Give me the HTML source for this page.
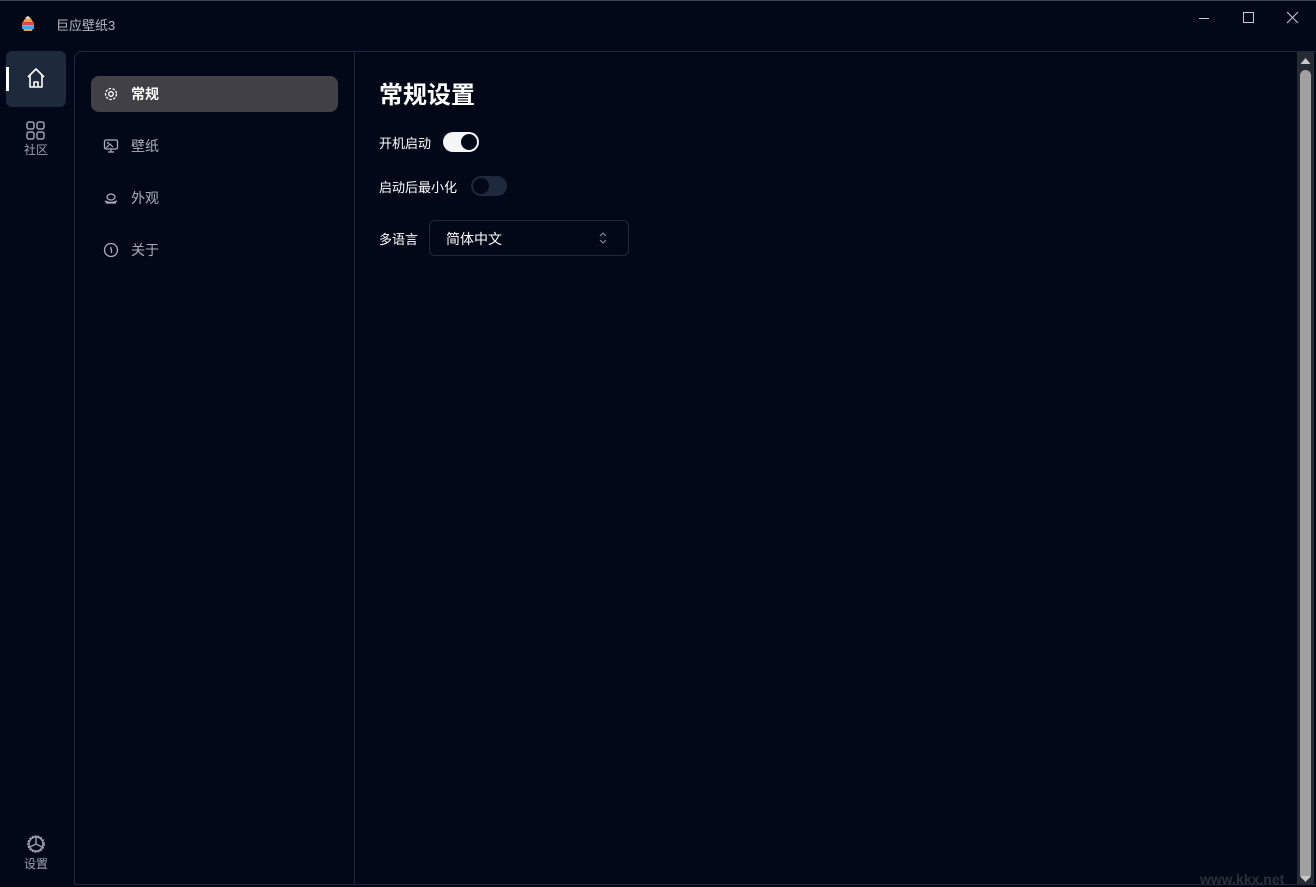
<!DOCTYPE html>
<html><head><meta charset="utf-8"><style>
*{margin:0;padding:0;box-sizing:border-box}
body{width:1316px;height:887px;background:#020817;font-family:"Liberation Sans","Noto Sans CJK SC",sans-serif;color:#e5e7eb;position:relative;overflow:hidden}
.abs{position:absolute}
.title{left:56px;top:15px;font-size:13px;color:#b8bcc6}
.panel{left:74px;top:51px;width:1250px;height:834px;border:1px solid #1e293b;border-radius:8px 0 0 0}
.div{left:354px;top:52px;width:1px;height:832px;background:#1e293b}
.nav{left:91px;width:247px;height:36px;border-radius:8px;font-size:14px;color:#aab0bb}
.nav span{position:absolute;left:40px;top:8px}
.nav svg{position:absolute;left:12px;top:10px}
.sw{width:36px;height:20px;border-radius:10px}
</style></head><body>
<div class="abs" style="left:0;top:0;width:1316px;height:1px;background:#3a4556"></div>
<svg class="abs" style="left:19px;top:15px" width="18" height="18" viewBox="0 0 18 18"><path d="M9 1 L13 5 L15 10 L13 16 L5 16 L3 10 L5 5Z" fill="#f0a040"/><rect x="3" y="7" width="12" height="3" fill="#e04060"/><rect x="3" y="11" width="12" height="3" fill="#30b0e0"/><path d="M6 3 L9 1 L12 4Z" fill="#f5f0e0"/></svg>
<div class="abs title">巨应壁纸3</div>
<svg class="abs" style="left:1197px;top:11px" width="110" height="14"><line x1="2" y1="7.5" x2="12" y2="7.5" stroke="#c8cbd2"/><rect x="46.5" y="1.5" width="10" height="10" fill="none" stroke="#c8cbd2"/><path d="M90 1 L101 12 M101 1 L90 12" stroke="#c8cbd2"/></svg>
<div class="abs" style="left:6px;top:51px;width:60px;height:56px;background:#1e293b;border-radius:6px"></div>
<div class="abs" style="left:6px;top:67px;width:3px;height:24px;background:#fff"></div>
<svg class="abs" style="left:25px;top:67px" width="22" height="22" viewBox="0 0 22 22"><path d="M3 10 L11 2 L19 10 M5 8 V20 H17 V8 M9 20 V15 H13 V20" fill="none" stroke="#fff" stroke-width="1.6" stroke-linejoin="round"/></svg>
<svg class="abs" style="left:26px;top:121px" width="20" height="19"><g fill="none" stroke="#9aa3b2" stroke-width="1.5"><rect x="1" y="1" width="7" height="7" rx="2"/><rect x="11" y="1" width="7" height="7" rx="2"/><rect x="1" y="11" width="7" height="7" rx="2"/><rect x="11" y="11" width="7" height="7" rx="2"/></g></svg>
<div class="abs" style="left:24px;top:141px;font-size:12px;color:#9aa3b2">社区</div>
<svg class="abs" style="left:26px;top:834px" width="20" height="20" viewBox="0 0 20 20"><circle cx="10" cy="10" r="8" fill="none" stroke="#9aa3b2" stroke-width="1.6" stroke-dasharray="2 1"/><circle cx="10" cy="10" r="7" fill="none" stroke="#9aa3b2" stroke-width="1.4"/><path d="M10 10 V3 M10 10 L16 13 M10 10 L4 13" stroke="#9aa3b2" stroke-width="1.4"/></svg>
<div class="abs" style="left:24px;top:855px;font-size:12px;color:#9aa3b2">设置</div>
<div class="abs panel"></div>
<div class="abs div"></div>
<div class="abs nav" style="top:76px;background:#404046;color:#fff"><svg width="16" height="16" viewBox="0 0 16 16"><circle cx="8" cy="8" r="2.3" fill="none" stroke="#fff" stroke-width="1.3"/><circle cx="8" cy="8" r="5.5" fill="none" stroke="#fff" stroke-width="1.3" stroke-dasharray="2.5 1.4"/></svg><span style="font-weight:bold">常规</span></div>
<div class="abs nav" style="top:128px"><svg width="16" height="16" viewBox="0 0 16 16"><rect x="1.5" y="2" width="13" height="9" rx="1.5" fill="none" stroke="#aab0bb" stroke-width="1.3"/><path d="M8 11 V14 M5 14 H11 M3 10 L7 6 L10 9" fill="none" stroke="#aab0bb" stroke-width="1.2"/><circle cx="5" cy="5" r="1" fill="#aab0bb"/></svg><span>壁纸</span></div>
<div class="abs nav" style="top:180px"><svg width="16" height="16" viewBox="0 0 16 16"><ellipse cx="8" cy="7" rx="4" ry="3" fill="none" stroke="#aab0bb" stroke-width="1.3"/><path d="M2 11 Q8 14 14 11 M3 13 H13" fill="none" stroke="#aab0bb" stroke-width="1.3"/></svg><span>外观</span></div>
<div class="abs nav" style="top:232px"><svg width="16" height="16" viewBox="0 0 16 16"><circle cx="8" cy="8" r="6.5" fill="none" stroke="#aab0bb" stroke-width="1.3"/><path d="M7.5 5 L8.5 8 V11" fill="none" stroke="#aab0bb" stroke-width="1.3"/></svg><span>关于</span></div>
<div class="abs" style="left:379px;top:75px;font-size:24px;font-weight:bold;color:#fff">常规设置</div>
<div class="abs" style="left:379px;top:133px;font-size:13px;color:#fff">开机启动</div>
<div class="abs sw" style="left:443px;top:132px;background:#f5f5f7"><div class="abs" style="left:18px;top:2px;width:16px;height:16px;border-radius:8px;background:#020817"></div></div>
<div class="abs" style="left:379px;top:177px;font-size:13px;color:#fff">启动后最小化</div>
<div class="abs sw" style="left:471px;top:176px;background:#1e293b"><div class="abs" style="left:2px;top:2px;width:16px;height:16px;border-radius:8px;background:#020817"></div></div>
<div class="abs" style="left:379px;top:229px;font-size:13px;color:#fff">多语言</div>
<div class="abs" style="left:429px;top:220px;width:200px;height:36px;border:1px solid #1e293b;border-radius:6px"><span class="abs" style="left:16px;top:8px;font-size:14px;color:#fff">简体中文</span><svg class="abs" style="left:169px;top:11px" width="8" height="12"><path d="M1 4 L4 1 L7 4 M1 8 L4 11 L7 8" fill="none" stroke="#8891a0"/></svg></div>
<div class="abs" style="left:1297px;top:52px;width:17px;height:832px;background:#262a33"></div>
<svg class="abs" style="left:1299px;top:56px" width="13" height="830"><path d="M1.5 8 L6.5 2 L11.5 8Z" fill="#c8c8c8"/><rect x="1" y="14" width="11" height="810" rx="5.5" fill="#a0a0a0"/><path d="M1.5 816 L6.5 822 L11.5 816Z" fill="#c8c8c8" transform="translate(0,4)"/></svg>
<div class="abs" style="left:1200px;top:871px;font-size:14px;font-weight:bold;color:#2a2f3a">www.kkx.net</div>
</body></html>
